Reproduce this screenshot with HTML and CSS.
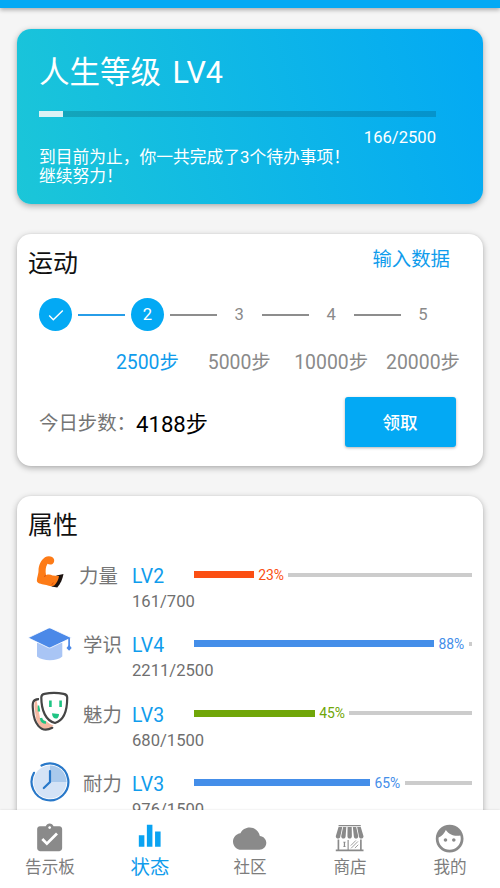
FILE: index.html
```html
<!DOCTYPE html>
<html lang="zh-CN">
<head>
<meta charset="utf-8">
<title>状态</title>
<link rel="stylesheet" href="styles.css">
</head>
<body>
<div class="app">
  <header class="topbar"></header>
  <main class="content">
    <section class="card level-card">
      <h1 class="level-title">人生等级 LV4</h1>
      <div class="level-track"><div class="level-fill" style="width:6.1%"></div></div>
      <div class="level-count">166/2500</div>
      <p class="level-note">到目前为止，你一共完成了3个待办事项！<br>继续努力！</p>
    </section>

    <section class="card sport-card">
      <div class="card-head">
        <h2 class="card-title">运动</h2>
        <a class="link">输入数据</a>
      </div>
      <div class="stepper">
        <div class="step"><span class="dot on"><svg width="18" height="18" viewBox="0 0 18 18"><path d="M2.2 9.600l4.100 4.100L15.800 4.400" fill="none" stroke="#fff" stroke-width="1.400"/></svg></span></div>
        <i class="line on"></i>
        <div class="step active"><span class="dot on">2</span><span class="step-label">2500步</span></div>
        <i class="line"></i>
        <div class="step"><span class="dot">3</span><span class="step-label">5000步</span></div>
        <i class="line"></i>
        <div class="step"><span class="dot">4</span><span class="step-label">10000步</span></div>
        <i class="line"></i>
        <div class="step"><span class="dot">5</span><span class="step-label">20000步</span></div>
      </div>
      <div class="today">
        <span class="today-label">今日步数：</span>
        <span class="today-value">4188步</span>
        <button class="claim">领取</button>
      </div>
    </section>

    <section class="card stats-card">
      <h2 class="card-title">属性</h2>
      <div class="stat strength">
        <svg class="stat-icon" width="44" height="44" viewBox="0 0 44 44">
          <path d="M29.500 20.500l7-1.600c-.8 4.800-3 9.800-6.200 13.500L24.500 31.500z" fill="#1c1310"/>
          <path d="M10 26.500C9.500 24 11.500 19 11.500 16c0-6 2.500-11 6.500-13.800 3-1.900 8-1.300 9 2 .8 3-1 5.300-3.800 5.300-1.200 0-2-.4-2.700-.8-2 2.900-2.200 7.400-1.500 11.300 2.700-.8 4.500-.6 6.500.600l6.500.3c-.4 3.800-2.300 7-4.700 9.600-2.500 1-5 .8-8-.5-3.500-.8-8.300-1.200-9.300-3.500z" fill="#fd7b17"/>
          <path d="M19 20.500l-2 1M24.600 30l1.800-2.500" stroke="#d84c0c" stroke-width=".9"/>
        </svg>
        <span class="stat-name">力量</span>
        <div class="stat-level"><b>LV2</b><span>161/700</span></div>
        <div class="meter"><i class="fill" style="width:59.700px"></i><span>23%</span><i class="rest"></i></div>
      </div>
      <div class="stat study">
        <svg class="stat-icon" width="44" height="44" viewBox="0 0 44 44">
          <path d="M9 20h25.300v13.500C29 38.500 15 38.500 9 33.500z" fill="#a9c5f5"/>
          <path d="M.1 14.800L20.300 5.200a3 3 0 0 1 2.500 0l20.600 9.600-20.600 9.800a3 3 0 0 1-2.500 0z" fill="#4b89e8" stroke="#fff" stroke-width=".8"/>
          <path d="M41.100 15v9" stroke="#4b89e8" stroke-width="1.700"/>
          <path d="M41.100 21.800l2.600 3.200-2.600 2.800-2.600-2.800z" fill="#4b89e8"/>
        </svg>
        <span class="stat-name">学识</span>
        <div class="stat-level"><b>LV4</b><span>2211/2500</span></div>
        <div class="meter"><i class="fill" style="width:240px"></i><span>88%</span><i class="rest"></i></div>
      </div>
      <div class="stat charm">
        <svg class="stat-icon" width="44" height="44" viewBox="0 0 44 44">
          <path d="M8.500 9c-3 1.500-2 8-1 14.500C8 32 13 40 21 38.500L26 34 12 27z" fill="#f6b9a2"/>
          <path d="M10.500 8.200C4.500 8.500 4.200 12 5 19c.8 12 7 24.500 19.300 17.800" fill="none" stroke="#454545" stroke-width="2.200" stroke-linecap="round"/>
          <path d="M11 14.500v6M13 27c.5 3 2.500 4.500 5 4.500" fill="none" stroke="#1fc483" stroke-width="2.500"/>
          <path d="M13.300 5c6-3.200 18.500-3.200 25.300 0C41 17 37 29 27 33c-10-3-15.500-14-13.700-28z" fill="#fff" stroke="#fff" stroke-width="4"/>
          <path d="M16.500 2.800c5-1 14-1 19.200 0 2.200.4 3.500 1.500 3.500 3.700C39.300 19.500 36 29.500 27 32 18 30 13.300 19.500 13.300 6.500c0-2 1-3.300 3.200-3.700z" fill="#fff" stroke="#454545" stroke-width="2.200"/>
          <path d="M22.400 9.500v6.500M32.600 9.500v6.500" stroke="#1fc483" stroke-width="2.600"/>
          <path d="M24 22.300l7 .6c0 7-7 5.600-7-.6z" fill="#1fc483"/>
        </svg>
        <span class="stat-name">魅力</span>
        <div class="stat-level"><b>LV3</b><span>680/1500</span></div>
        <div class="meter"><i class="fill" style="width:120.700px"></i><span>45%</span><i class="rest"></i></div>
      </div>
      <div class="stat stamina">
        <svg class="stat-icon" width="44" height="44" viewBox="0 0 44 44">
          <circle cx="22" cy="22" r="16.500" fill="#d4e3f6"/>
          <path d="M22 22V5.500A16.500 16.500 0 0 1 38.500 22z" fill="#a9c9ec"/>
          <path d="M13.500 5.600A18.400 18.400 0 1 1 6 12.800" fill="none" stroke="#2878c9" stroke-width="2.200" stroke-linecap="round"/>
          <path d="M22 11v11l-6.200 6" fill="none" stroke="#2878c9" stroke-width="2.200" stroke-linecap="round"/>
        </svg>
        <span class="stat-name">耐力</span>
        <div class="stat-level"><b>LV3</b><span>976/1500</span></div>
        <div class="meter"><i class="fill" style="width:176px"></i><span>65%</span><i class="rest"></i></div>
      </div>
    </section>
  </main>

  <nav class="tabs">
    <a class="tab"><svg viewBox="0 0 24 24"><path d="M19 3h-4.180C14.400 1.840 13.300 1 12 1s-2.400.84-2.820 2H5c-1.100 0-2 .9-2 2v14c0 1.100.9 2 2 2h14c1.100 0 2-.9 2-2V5c0-1.100-.9-2-2-2zm-7 0c.55 0 1 .45 1 1s-.45 1-1 1-1-.45-1-1 .45-1 1-1zm-2 14l-4-4 1.410-1.410L10 14.170l6.590-6.590L18 9l-8 8z"/></svg><span>告示板</span></a>
    <a class="tab active"><svg viewBox="0 0 24 24"><path d="M4.200 9.600h4v8.200h-4zM10 1.900h4v15.900h-4zM15.900 6.900h4v10.900h-4z"/></svg><span>状态</span></a>
    <a class="tab"><svg viewBox="0 0 24 24"><path d="M19.350 10.040C18.670 6.590 15.640 4 12 4 9.110 4 6.600 5.640 5.350 8.040 2.340 8.360 0 10.910 0 14c0 3.310 2.690 6 6 6h13c2.760 0 5-2.240 5-5 0-2.640-2.050-4.780-4.650-4.960z"/></svg><span>社区</span></a>
    <a class="tab"><svg viewBox="0 0 24 24">
      <path d="M4 2.200h16v.9H4zM4 3.600h2.700L5.300 10.200c0 2.200-3.300 2.200-3.300 0zM7.300 3.600h2.300l-.5 6.600c0 2.200-3.200 2.200-3.200 0zM10.500 3.600h3l.1 6.600c0 2.200-3.200 2.200-3.200 0zM14.300 3.600h2.400l1.500 6.600c0 2.200-3.200 2.200-3.200 0zM17.400 3.600H20l2 6.600c0 2.200-3.300 2.200-3.300 0z"/>
      <path d="M3.300 12.600h1.200V20H3.300zM19.500 12.600h1.200V20h-1.200zM10.500 13h.8v7h-.8zM2 19.800h20V21H2zM7.400 14.200h1.700v.6h-.4v2.700h.4v.6H7.400v-.6h.4v-2.700h-.4z"/>
      <path d="M12.800 17l3.700-3.700M13 19l5-5M15.800 18.800l2.400-2.400" stroke="#8a8a8a" stroke-width=".6"/>
    </svg><span>商店</span></a>
    <a class="tab"><svg viewBox="0 0 24 24"><path d="M9 11.750c-.69 0-1.250.56-1.250 1.250s.56 1.250 1.250 1.250 1.250-.56 1.250-1.250-.56-1.250-1.250-1.250zm6 0c-.69 0-1.250.56-1.250 1.250s.56 1.250 1.250 1.250 1.250-.56 1.250-1.250-.56-1.250-1.250-1.250zM12 2C6.480 2 2 6.480 2 12s4.480 10 10 10 10-4.480 10-10S17.520 2 12 2zm0 18c-4.410 0-8-3.590-8-8 0-.29.020-.58.050-.86 2.360-1.050 4.230-2.980 5.210-5.370C11.070 8.330 14.050 10 17.420 10c.78 0 1.530-.09 2.250-.26.210.71.330 1.470.330 2.260 0 4.410-3.590 8-8 8z"/></svg><span>我的</span></a>
  </nav>
</div>
</body>
</html>
```
FILE: styles.css
```css
* { box-sizing: border-box; }
body {
  margin: 0;
  background: #f5f5f5;
  font-family: Roboto, "Noto Sans CJK SC", sans-serif;
  color: #111;
}
h1, h2, p { margin: 0; font-weight: 400; }
.app {
  height: 888px;
  display: flex;
  flex-direction: column;
  overflow: hidden;
}
.topbar {
  flex: none;
  height: 8px;
  background: #03a9f4;
  box-shadow: 0 2px 4px rgba(0, 0, 0, .3);
}
.content {
  flex: 1;
  min-height: 0;
  overflow: hidden;
  padding: 21px 17px 0;
}
.card {
  border-radius: 14px;
  background: #fff;
  box-shadow: 0 2px 6px rgba(0, 0, 0, .3), 0 0 2px rgba(0, 0, 0, .06);
  margin-bottom: 30px;
}

.level-card {
  height: 175px;
  padding: 22px 47px 0 22px;
  color: #fff;
  background: linear-gradient(75deg, #1bc6d8, #03a9f4);
}
.level-title { font-size: 30.500px; line-height: 44px; word-spacing: 4px; }
.level-track { height: 5.500px; margin-top: 16px; background: rgba(0, 0, 0, .15); }
.level-fill { height: 100%; background: rgba(255, 255, 255, .85); }
.level-count { margin-top: 11px; text-align: right; font-size: 16.600px; line-height: 20px; }
.level-note { font-size: 16.750px; line-height: 19.500px; margin-right: -20px; }

.sport-card { height: 231.500px; }
.card-head { display: flex; justify-content: space-between; height: 47px; padding-right: 33px; }
.card-title { padding: 12px 0 0 11px; font-size: 25px; line-height: 36px; }
.link { padding-top: 12px; font-size: 19.400px; line-height: 28px; color: #109cec; }
.stepper { display: flex; padding: 17px 43.500px 0 22px; }
.step {
  width: 33px;
  display: flex;
  flex-direction: column;
  align-items: center;
  color: #8a8a8a;
}
.dot {
  width: 33px;
  height: 33px;
  border-radius: 50%;
  display: flex;
  align-items: center;
  justify-content: center;
  font-size: 16.600px;
}
.dot.on { background: #03a9f4; color: #fff; }
.step-label { margin-top: 18px; font-size: 19.400px; line-height: 28px; white-space: nowrap; }
.step.active { color: #109cec; }
.line { flex: 1; height: 1.500px; margin: 16px 6px 0; background: #8d8d8d; }
.line.on { background: #279de8; }
.today { display: flex; align-items: center; height: 50px; margin-top: 19.500px; padding: 0 27.500px 0 22px; }
.today-label { font-size: 19.400px; color: #757575; }
.today-value { font-size: 22.200px; color: #000; }
.claim {
  width: 111px;
  height: 50px;
  margin-left: auto;
  border: 0;
  border-radius: 3px;
  background: #03a9f4;
  box-shadow: 0 1px 3px rgba(0, 0, 0, .3);
  color: #fff;
  font: 500 17.500px Roboto, "Noto Sans CJK SC", sans-serif;
}

.stats-card { height: 420px; }
.stat { height: 69.400px; display: flex; padding: 0 11px; }
.stats-card .card-title { padding-bottom: 3px; }
.stat-icon { flex: none; margin-top: 8.500px; }
.strength .stat-icon { margin-left: -1px; }
.study .stat-icon { margin-top: 7px; }
.charm .stat-icon { margin-top: 6px; }
.stamina .stat-icon { margin-top: 5.500px; }
.stat-name { width: 49px; margin-left: 11px; font-size: 19.400px; line-height: 28px; padding-top: 16.500px; color: #757575; }
.strength .stat-name { width: 53px; margin-left: 8px; }
.stat-level { width: 62px; display: flex; flex-direction: column; padding-top: 17.500px; white-space: nowrap; }
.stat-level b { font-weight: 400; font-size: 19.400px; line-height: 26px; color: #109cec; }
.stat-level span { font-size: 16.600px; line-height: 24px; color: #6f6f6f; }
.meter { flex: 1; height: 20px; margin-top: 18px; display: flex; align-items: center; font-size: 13.900px; }
.meter .fill { height: 7px; background: currentColor; }
.meter span { margin: 0 4.500px; }
.meter .rest { flex: 1; height: 4px; background: #ccc; }
.strength .meter { color: #fb4f13; }
.study .meter, .stamina .meter { color: #448ee9; }
.charm .meter { color: #70a608; }

.tabs {
  position: relative;
  flex: none;
  height: 78px;
  display: flex;
  background: #fff;
  box-shadow: 0 0 2px rgba(0, 0, 0, .12);
}
.tab {
  flex: 1;
  display: flex;
  flex-direction: column;
  align-items: center;
  padding-top: 11.500px;
  font-size: 16.600px;
  line-height: 24px;
  color: #7d7d7d;
}
.tab svg { width: 33.300px; height: 33.300px; fill: #8a8a8a; }
.tab span { margin-top: 1px; }
.tab.active { color: #109cec; font-size: 19.400px; }
.tab.active svg { fill: #0aa3f2; }
```
